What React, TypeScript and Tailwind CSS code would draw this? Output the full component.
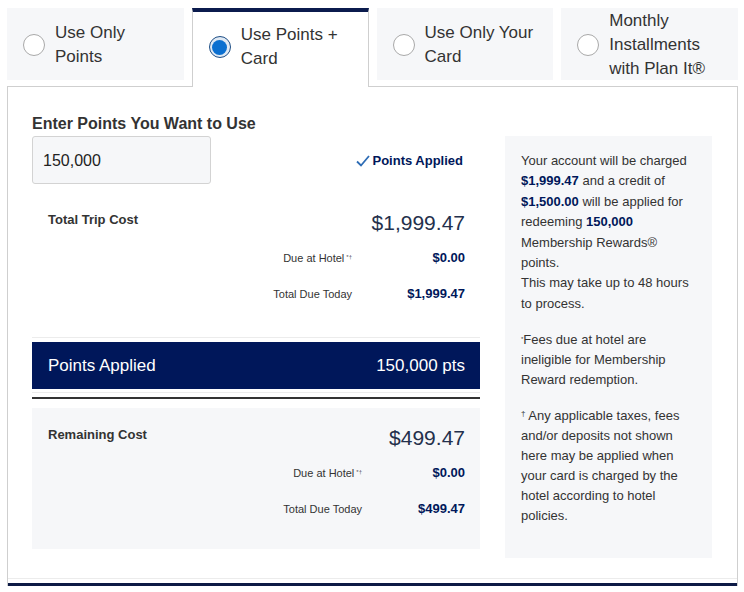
import React from "react";

const NAVY = "text-[#00175a]";

function Radio({ checked }: { checked?: boolean }) {
  if (checked) {
    return (
      <span className="flex h-[22px] w-[22px] shrink-0 items-center justify-center rounded-full border border-[#1f4f86] bg-[#dfe9f4]">
        <span className="h-[15px] w-[15px] rounded-full bg-[#0a6fd0]" />
      </span>
    );
  }
  return <span className="h-[22px] w-[22px] shrink-0 rounded-full border border-[#a9a9a9] bg-white" />;
}

const tabs = [
  { label: ["Use Only", "Points"] },
  { label: ["Use Points +", "Card"], active: true },
  { label: ["Use Only Your", "Card"] },
  { label: ["Monthly", "Installments", "with Plan It®"] },
];

function Tab({ label, active }: { label: string[]; active?: boolean }) {
  if (active) {
    return (
      <div className="relative z-10 -mb-px flex h-[79px] items-start border-x border-t-4 border-x-[#cfcfcf] border-t-[#0b1b4d] bg-white pl-4">
        <div className="flex h-[70px] items-center gap-[10px]">
          <Radio checked />
          <div className="text-[17px] leading-6 text-[#333]">
            {label.map((l) => (
              <div key={l}>{l}</div>
            ))}
          </div>
        </div>
      </div>
    );
  }
  return (
    <div className="flex h-[72px] items-center gap-[10px] self-start bg-[#f6f7f9] pl-4 pt-[2px]">
      <Radio />
      <div className="text-[17px] leading-6 text-[#333]">
        {label.map((l) => (
          <div key={l}>{l}</div>
        ))}
      </div>
    </div>
  );
}

function Sup() {
  return <sup className="ml-[2px] text-[6px] leading-none text-[#555]">*†</sup>;
}

function CostBlock({
  title,
  total,
  due,
  today,
  valueCol,
}: {
  title: string;
  total: string;
  due: string;
  today: string;
  valueCol: string;
}) {
  return (
    <div>
      <div className="flex items-start justify-between">
        <div className="pt-[3px] text-[13px] font-bold leading-[18px] text-[#333]">{title}</div>
        <div className="pt-px text-[21px] leading-7 text-[#24304c]">{total}</div>
      </div>
      <div className="mt-[3px]">
        <div className="flex h-9 items-center justify-end">
          <span className="text-[11px] text-[#333]">
            Due at Hotel
            <Sup />
          </span>
          <span className={`${valueCol} text-right text-[13px] font-bold ${NAVY}`}>{due}</span>
        </div>
        <div className="flex h-9 items-center justify-end">
          <span className="text-[11px] text-[#333]">Total Due Today</span>
          <span className={`${valueCol} text-right text-[13px] font-bold ${NAVY}`}>{today}</span>
        </div>
      </div>
    </div>
  );
}

export default function App() {
  return (
    <div
      className="min-h-[592px] bg-white pt-2"
      style={{ fontFamily: '"Liberation Sans", Arial, Helvetica, sans-serif' }}
    >
      <div className="ml-[7px] w-[731px]">
        {/* Payment option tabs */}
        <div className="grid h-[78px] grid-cols-4 gap-2">
          {tabs.map((t) => (
            <Tab key={t.label.join(" ")} label={t.label} active={t.active} />
          ))}
        </div>

        {/* Panel */}
        <div className="border-x border-t border-[#cfcfcf]">
          <div className="px-6 pt-[25px]">
            <h2 className="text-[16px] font-bold leading-6 text-[#333]">Enter Points You Want to Use</h2>
          </div>
          <div className="flex gap-[25px] pl-6 pr-6">
            {/* Left column */}
            <div className="w-[448px]">
              <div className="flex items-center justify-between pr-[17px]">
                <div className="flex h-12 w-[179px] items-center rounded-[3px] border border-[#d3d3d3] bg-[#f6f7f9] px-[10px] pt-px text-[16px] text-[#222]">
                  150,000
                </div>
                <div className={`flex items-center gap-[2px] pt-[2px] text-[13px] font-bold ${NAVY}`}>
                  <svg width="14" height="12" viewBox="0 0 14 12" fill="none">
                    <path d="M1 6.5 L5 10.5 L13 1" stroke="#2d6cb5" strokeWidth="1.8" />
                  </svg>
                  Points Applied
                </div>
              </div>

              <div className="mt-6 px-4 pr-[15px]">
                <CostBlock
                  title="Total Trip Cost"
                  total="$1,999.47"
                  due="$0.00"
                  today="$1,999.47"
                  valueCol="w-[113px]"
                />
              </div>

              <div className="mt-[25px] h-px bg-[#ececec]" />
              <div className="mt-1 flex h-[47px] items-center justify-between bg-[#00175a] px-4 pr-[15px] text-[17px] text-white">
                <span>Points Applied</span>
                <span>150,000 pts</span>
              </div>
              <div className="mt-[3px] h-px bg-[#ececec]" />
              <div className="mt-1 h-[2px] bg-[#333]" />

              <div className="mt-[9px] bg-[#f6f7f9] px-4 pb-[22px] pr-[15px] pt-[15px]">
                <CostBlock
                  title="Remaining Cost"
                  total="$499.47"
                  due="$0.00"
                  today="$499.47"
                  valueCol="w-[103px]"
                />
              </div>
            </div>

            {/* Right info box */}
            <div className="h-[422px] w-[207px] bg-[#f6f7f9] px-4 pt-[15px] text-[13px] leading-[20.4px] text-[#333]">
              <p>
                Your account will be charged <b className={NAVY}>$1,999.47</b> and a credit of{" "}
                <b className={NAVY}>$1,500.00</b> will be applied for redeeming{" "}
                <b className={NAVY}>150,000</b> Membership Rewards® points.
                <br />
                This may take up to 48 hours to process.
              </p>
              <p className="mt-4 leading-5">
                <sup className="text-[6px] leading-none">*</sup>Fees due at hotel are ineligible for
                Membership Reward redemption.
              </p>
              <p className="mt-4 leading-5">
                <sup className="text-[8px] leading-none">†</sup> Any applicable taxes, fees and/or deposits
                not shown here may be applied when your card is charged by the hotel according to hotel
                policies.
              </p>
            </div>
          </div>
          <div className="mt-5 h-px bg-[#ececec]" />
          <div className="mt-1 h-[3px] bg-[#0d1a45]" />
        </div>
      </div>
    </div>
  );
}
